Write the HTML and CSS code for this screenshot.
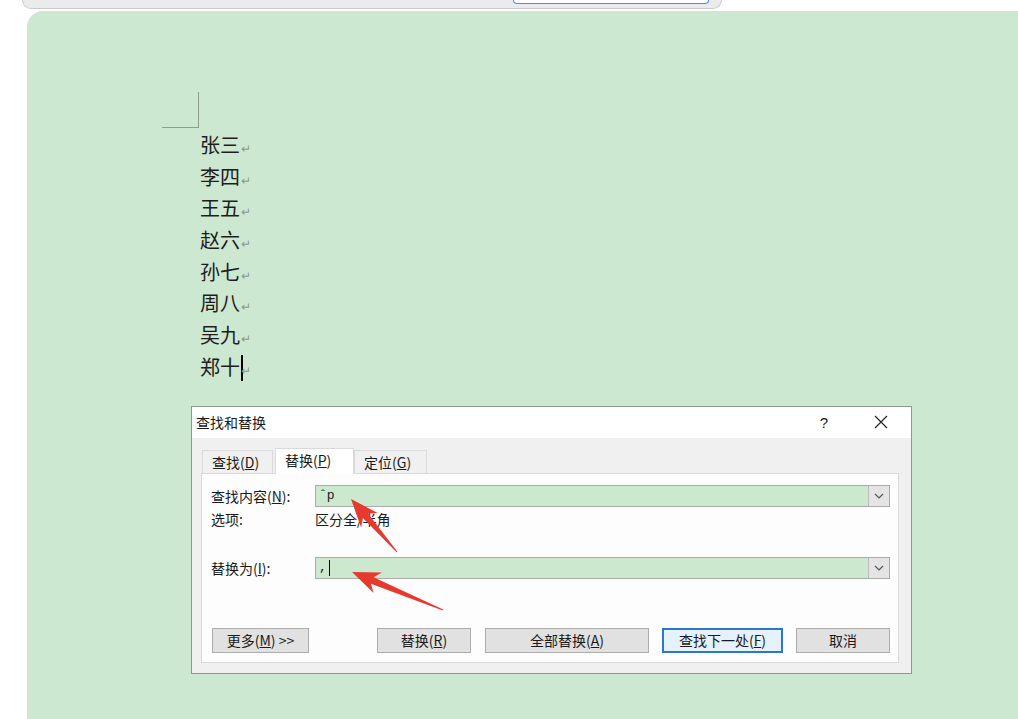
FILE: index.html
```html
<!DOCTYPE html>
<html lang="zh-CN">
<head>
  <meta charset="UTF-8" />
  <meta name="viewport" content="width=device-width, initial-scale=1.0"/>
  <title>查找和替换</title>
  <link rel="stylesheet" href="styles.css">
</head>
<body>
  <div class="topbar"><div class="omnibox"></div></div>

  <main class="doc">
    <div class="corner"></div>
    <ul class="names">
      <li>张三<span class="ret">↵</span></li>
      <li>李四<span class="ret">↵</span></li>
      <li>王五<span class="ret">↵</span></li>
      <li>赵六<span class="ret">↵</span></li>
      <li>孙七<span class="ret">↵</span></li>
      <li>周八<span class="ret">↵</span></li>
      <li>吴九<span class="ret">↵</span></li>
      <li>郑十<span class="caret"></span><span class="ret">↵</span></li>
    </ul>

    <div class="dialog">
      <div class="titlebar">
        <span class="title">查找和替换</span>
        <span class="help">?</span>
        <span class="close">
          <svg width="14" height="14" viewBox="0 0 14 14"><path d="M1 1 L13 13 M13 1 L1 13" stroke="#222" stroke-width="1.2" fill="none"/></svg>
        </span>
      </div>
      <div class="dlg-body">
        <div class="tabs">
          <div class="tab">查找(<u>D</u>)</div>
          <div class="tab active">替换(<u>P</u>)</div>
          <div class="tab">定位(<u>G</u>)</div>
        </div>
        <div class="panel">
          <div class="row first">
            <label class="lbl">查找内容(<u>N</u>):</label>
            <div class="combo">
              <span class="val">ˆp</span>
              <span class="drop"><svg width="10" height="6" viewBox="0 0 10 6"><path d="M1 1 L5 5 L9 1" stroke="#555" stroke-width="1.2" fill="none"/></svg></span>
            </div>
          </div>
          <div class="row opts">
            <span class="lbl">选项:</span>
            <span>区分全/半角</span>
          </div>
          <div class="row second">
            <label class="lbl">替换为(<u>I</u>):</label>
            <div class="combo">
              <span class="val">,<span class="icaret"></span></span>
              <span class="drop"><svg width="10" height="6" viewBox="0 0 10 6"><path d="M1 1 L5 5 L9 1" stroke="#555" stroke-width="1.2" fill="none"/></svg></span>
            </div>
          </div>
          <div class="buttons">
            <button class="btn more">更多(<u>M</u>) &gt;&gt;</button>
            <div class="btn-group">
              <button class="btn w94">替换(<u>R</u>)</button>
              <button class="btn w164">全部替换(<u>A</u>)</button>
              <button class="btn w121 default">查找下一处(<u>F</u>)</button>
              <button class="btn w94">取消</button>
            </div>
          </div>
        </div>
      </div>

      <svg class="arrows" width="721" height="268" viewBox="191 406 721 268">
        <polygon fill="#e8392e" points="351,499 377.7,513 368.1,513.4 397.4,551.7 396.6,552.3 362.9,518 361.1,527.4"/>
        <polygon fill="#e8392e" points="352,572 382,572.6 373.6,577.3 443.2,609.4 442.8,610.6 370.9,583.7 373.6,593"/>
      </svg>
    </div>
  </main>
</body>
</html>
```

FILE: styles.css
```css
body {
  margin: 0;
  background: #fff;
  font-family: "Noto Sans CJK SC", sans-serif;
  height: 719px;
  overflow: hidden;
}
.topbar {
  margin-left: 22px;
  width: 700px;
  height: 9px;
  box-sizing: border-box;
  background: #ebebee;
  border: 1px solid #cacace;
  border-top: none;
  border-radius: 0 0 12px 12px;
  display: flex;
}
.omnibox {
  margin-left: 490px;
  width: 194px;
  height: 3px;
  border: 1px solid #4d8af0;
  border-top: none;
  border-radius: 0 0 6px 6px;
  background: #fff;
}
.doc {
  margin: 2px 0 0 27px;
  height: 708px;
  background: #cde8d0;
  border-radius: 16px 0 0 0;
  padding-top: 81px;
  box-sizing: border-box;
}
.corner {
  margin-left: 135px;
  width: 36px;
  height: 35px;
  border-right: 1px solid #8e9d90;
  border-bottom: 1px solid #8e9d90;
}
.names {
  list-style: none;
  margin: 1px 0 0 173px;
  padding: 0;
  font-size: 20px;
  line-height: 31.7px;
  color: #1d1d1d;
}
.names li {
  height: 31.7px;
}
.ret {
  font-size: 12px;
  line-height: 0;
  color: #8a988c;
  margin-left: 1px;
}
.caret {
  display: inline-block;
  width: 2px;
  height: 26px;
  background: #000;
  vertical-align: -6px;
  margin-left: 1px;
  margin-right: -3px;
}
.dialog {
  position: relative;
  margin: 23px 0 0 164px;
  width: 721px;
  height: 268px;
  box-sizing: border-box;
  border: 1px solid #8c9a8d;
  background: #f0f0f0;
  font-size: 14px;
  color: #1a1a1a;
}
.titlebar {
  height: 31px;
  background: #fff;
  display: flex;
  align-items: center;
  padding-left: 4px;
}
.title {
  font-size: 14px;
  flex: 1;
}
.help {
  width: 28px;
  text-align: center;
  font-family: "Liberation Sans", sans-serif;
  font-size: 15px;
}
.close {
  width: 28px;
  margin: 0 16px 0 29px;
  display: flex;
  justify-content: center;
}
.dlg-body {
  padding: 10px 12px 0 9px;
}
.tabs {
  display: flex;
  align-items: flex-end;
  height: 25px;
  padding-left: 1px;
}
.tab {
  height: 23px;
  box-sizing: border-box;
  border: 1px solid #dadada;
  border-bottom: none;
  padding: 0 9px;
  line-height: 22px;
  background: #f0f0f0;
}
.tab:first-child {
  width: 71px;
  margin-right: 2px;
}
.tab.active {
  width: 79px;
  height: 26px;
  background: #fff;
  position: relative;
  margin-bottom: -1px;
  z-index: 1;
}
.tab:last-child {
  width: 73px;
}
.panel {
  height: 190px;
  box-sizing: border-box;
  border: 1px solid #d9d9d9;
  background: #fdfdfd;
  padding: 11px 8px 0 9px;
}
.row {
  display: flex;
  align-items: center;
}
.lbl {
  width: 104px;
  flex: none;
}
.combo {
  flex: 1;
  height: 22px;
  box-sizing: border-box;
  border: 1px solid #a9aca9;
  background: #cce8cf;
  display: flex;
  align-items: center;
}
.val {
  flex: 1;
  padding-left: 3px;
  font-family: "Liberation Mono", monospace;
  font-size: 13px;
  display: flex;
  align-items: center;
}
.icaret {
  display: inline-block;
  width: 1px;
  height: 16px;
  background: #000;
  margin-left: 2px;
}
.drop {
  width: 20px;
  height: 20px;
  background: #e4e4e4;
  border-left: 1px solid #b9b9b9;
  display: flex;
  align-items: center;
  justify-content: center;
}
.opts {
  height: 20px;
  margin-top: 2px;
}
.second {
  margin-top: 28px;
}
.buttons {
  display: flex;
  justify-content: space-between;
  margin-top: 49px;
  padding-left: 1px;
}
.btn-group {
  display: flex;
  gap: 13px;
}
.btn {
  height: 25px;
  box-sizing: border-box;
  border: 1px solid #adadad;
  background: #e1e1e1;
  font-family: "Noto Sans CJK SC", sans-serif;
  font-size: 14px;
  color: #1a1a1a;
  padding: 0;
}
.more { width: 97px; }
.w94 { width: 94px; }
.w164 { width: 164px; margin-left: 1px; }
.w121 { width: 121px; }
.default {
  border: 2px solid #2b78c6;
  background: #e5f1fb;
}
.arrows {
  position: absolute;
  left: -1px;
  top: -1px;
}
```
